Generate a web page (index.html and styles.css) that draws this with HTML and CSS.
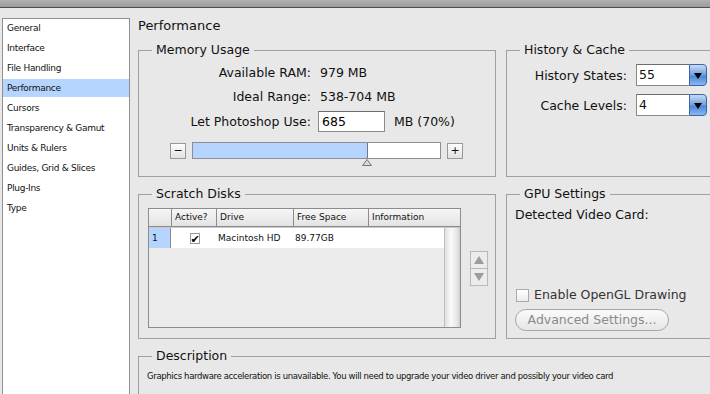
FILE: index.html
```html
<!DOCTYPE html>
<html lang="en">
<head>
    <meta charset="UTF-8">
    <title>Preferences</title>
    <link rel="stylesheet" href="styles.css">
</head>
<body>

<div class="titlebar"><span class="title">Preferences</span></div>

<div class="window">
    <ul class="nav">
        <li>General</li>
        <li>Interface</li>
        <li>File Handling</li>
        <li class="selected">Performance</li>
        <li>Cursors</li>
        <li>Transparency &amp; Gamut</li>
        <li>Units &amp; Rulers</li>
        <li>Guides, Grid &amp; Slices</li>
        <li>Plug-Ins</li>
        <li>Type</li>
    </ul>

    <div class="panel">
        <h1>Performance</h1>

        <div class="groups">
            <fieldset class="box memory">
                <legend>Memory Usage</legend>
                <div class="stats">
                    <span class="label">Available RAM:</span><span>979 MB</span>
                    <span class="label">Ideal Range:</span><span>538-704 MB</span>
                    <span class="label">Let Photoshop Use:</span>
                    <span class="use"><input class="field" type="text" value="685"><span>MB (70%)</span></span>
                </div>
                <div class="slider">
                    <span class="step">&minus;</span>
                    <div class="track">
                        <div class="fill" style="width: 174px"></div>
                        <svg class="thumb" width="10" height="7" viewBox="0 0 10 7"><path d="M5 0.5 L9.5 6.5 L0.5 6.5 Z" fill="#d8d8d8" stroke="#777"/></svg>
                    </div>
                    <span class="step">+</span>
                </div>
            </fieldset>

            <fieldset class="box history">
                <legend>History &amp; Cache</legend>
                <div class="selects">
                    <span class="label">History States:</span>
                    <span class="combo"><span class="value">55</span><span class="drop"></span></span>
                    <span class="label">Cache Levels:</span>
                    <span class="combo"><span class="value">4</span><span class="drop"></span></span>
                </div>
            </fieldset>

            <fieldset class="box scratch">
                <legend>Scratch Disks</legend>
                <div class="disks">
                    <div class="table">
                        <div class="thead">
                            <span class="c0"></span>
                            <span class="c1">Active?</span>
                            <span class="c2">Drive</span>
                            <span class="c3">Free Space</span>
                            <span class="c4">Information</span>
                        </div>
                        <div class="tbody">
                            <div class="rows">
                                <div class="row">
                                    <span class="c0 num">1</span>
                                    <span class="c1"><span class="check">&#10004;</span></span>
                                    <span class="c2">Macintosh HD</span>
                                    <span class="c3">89.77GB</span>
                                </div>
                            </div>
                            <div class="vscroll"></div>
                        </div>
                    </div>
                    <div class="order">
                        <span class="arrow up"></span>
                        <span class="arrow down"></span>
                    </div>
                </div>
            </fieldset>

            <fieldset class="box gpu">
                <legend>GPU Settings</legend>
                <div class="card">Detected Video Card:</div>
                <label class="opengl"><span class="tick"></span>Enable OpenGL Drawing</label>
                <span class="pill">Advanced Settings...</span>
            </fieldset>

            <fieldset class="box desc">
                <legend>Description</legend>
                <p>Graphics hardware acceleration is unavailable. You will need to upgrade your video driver and possibly your video card</p>
            </fieldset>
        </div>
    </div>
</div>

</body>
</html>
```

FILE: styles.css
```css
body {
    margin: 0;
    width: 710px;
    height: 394px;
    overflow: hidden;
    background: #e8e8e8;
    font-family: "DejaVu Sans", sans-serif;
    color: #111;
}
.titlebar {
    height: 7px;
    background: linear-gradient(#b0b0b0, #9c9c9c);
    border-bottom: 1px solid #4e4e4e;
    overflow: hidden;
    text-align: center;
}
.title {
    display: block;
    margin-top: -11px;
    padding-left: 136px;
    font-size: 13px;
    line-height: 14px;
    color: #222;
}
.window {
    display: flex;
    padding-top: 10px;
}
.nav {
    flex-shrink: 0;
    list-style: none;
    margin: 0 0 0 2px;
    padding: 0;
    width: 126px;
    height: 375px;
    background: #fff;
    border: 1px solid #8f8f8f;
    border-bottom: 0;
    font-size: 9px;
    letter-spacing: -0.3px;
}
.nav li {
    height: 20px;
    line-height: 18px;
    padding-left: 4px;
    white-space: nowrap;
}
.nav li.selected {
    background: linear-gradient(#b5d5ff 18px, #fff 18px);
}
.panel {
    margin-left: 8px;
    min-width: 0;
}
h1 {
    margin: 0;
    font-size: 13px;
    font-weight: normal;
    line-height: 16px;
}
.groups {
    display: grid;
    grid-template-columns: 358px 204px;
    grid-template-rows: 135px 153px 46px;
    column-gap: 10px;
    row-gap: 9px;
    margin-top: 8px;
}
.box {
    margin: 0;
    padding: 0;
    border: 1px solid #a0a0a0;
    min-width: 0;
    font-size: 12.5px;
}
.history, .gpu, .desc {
    border-right: 0;
}
.box legend {
    margin-left: 13px;
    padding: 0 4px;
    line-height: 16px;
}
.stats {
    display: grid;
    grid-template-columns: 172px auto;
    grid-template-rows: 24px 24px 26px;
    column-gap: 9px;
    align-items: center;
    margin-top: 2px;
}
.label {
    text-align: right;
}
.use {
    display: flex;
    align-items: center;
    gap: 9px;
}
.field {
    width: 67px;
    height: 21px;
    margin: 0 0 0 -2px;
    padding: 0 3px;
    box-sizing: border-box;
    border: 1px solid #8a8a8a;
    border-top-color: #6a6a6a;
    font: inherit;
    background: #fff;
}
.slider {
    display: flex;
    align-items: flex-start;
    gap: 6px;
    margin: 8px 0 0 31px;
}
.step {
    width: 14px;
    height: 14px;
    border: 1px solid #999;
    background: linear-gradient(#fdfdfd, #e2e2e2);
    font-size: 11px;
    line-height: 13px;
    text-align: center;
    margin-top: 1px;
}
.track {
    position: relative;
    width: 247px;
    height: 15px;
    border: 1px solid #8e8e8e;
    background: #fff;
}
.fill {
    height: 100%;
    background: #b5d5ff;
    border-right: 1px solid #777;
}
.thumb {
    position: absolute;
    left: 169px;
    top: 16px;
}
.selects {
    display: grid;
    grid-template-columns: 120px 71px;
    grid-template-rows: 22px 22px;
    column-gap: 9px;
    row-gap: 8px;
    align-items: center;
    margin-top: 6px;
}
.combo {
    display: flex;
    height: 22px;
}
.combo .value {
    flex: 1;
    background: #fff;
    border: 1px solid #8a8a8a;
    border-top-color: #6b6b6b;
    border-right: 0;
    padding-left: 2px;
    line-height: 20px;
}
.combo .drop {
    position: relative;
    width: 16px;
    border: 1px solid #3f63a8;
    border-radius: 0 4px 4px 0;
    background: linear-gradient(#c7dcf6, #6d9fe0 50%, #4a86d8 55%, #8ab8f0);
}
.combo .drop::after {
    content: "";
    position: absolute;
    left: 4px;
    top: 8px;
    border-left: 4px solid transparent;
    border-right: 4px solid transparent;
    border-top: 6px solid #000;
}
.disks {
    display: flex;
    align-items: flex-start;
    gap: 9px;
    margin: 6px 0 0 9px;
}
.table {
    width: 311px;
    height: 118px;
    border: 1px solid #8c8c8c;
    display: flex;
    flex-direction: column;
    font-size: 9px;
}
.thead {
    display: flex;
    height: 17px;
    line-height: 16px;
    border-bottom: 1px solid #8c8c8c;
    background: linear-gradient(#f6f6f6, #e3e3e3);
}
.thead span {
    border-right: 1px solid #8c8c8c;
    padding-left: 3px;
    box-sizing: border-box;
}
.thead span:last-child {
    border-right: 0;
}
.c0 { width: 23px; }
.c1 { width: 45px; }
.c2 { width: 77px; }
.c3 { width: 75px; }
.c4 { flex: 1; }
.tbody {
    flex: 1;
    display: flex;
    background: #ebebeb;
    border-top: 1px solid #c8c8c8;
}
.rows {
    flex: 1;
}
.row {
    display: flex;
    height: 20px;
    line-height: 20px;
    background: #fff;
}
.row span {
    box-sizing: border-box;
    padding-left: 2px;
}
.row .num {
    background: #b5d5ff;
    border-right: 1px solid #8c8c8c;
    padding-left: 3px;
    width: 22px;
}
.row .c1 {
    display: flex;
    justify-content: center;
    align-items: center;
}
.check {
    width: 10px;
    height: 11px;
    border: 1px solid #9a9a9a;
    background: #fff;
    font-size: 11px;
    line-height: 12px;
    text-align: center;
    color: #000;
    padding: 0 !important;
}
.vscroll {
    width: 15px;
    border-left: 1px solid #bdbdbd;
    background: linear-gradient(90deg, #e0e0e0, #fafafa 40%, #e6e6e6 80%, #cfcfcf);
}
.order {
    display: flex;
    flex-direction: column;
    margin-top: 43px;
    border: 1px solid #b8b8b8;
}
.arrow {
    position: relative;
    width: 16px;
    height: 16px;
    background: #ececec;
}
.arrow.up {
    border-bottom: 1px solid #b8b8b8;
}
.arrow::after {
    content: "";
    position: absolute;
    left: 3px;
    border-left: 5px solid transparent;
    border-right: 5px solid transparent;
}
.arrow.up::after {
    top: 4px;
    border-bottom: 8px solid #9c9c9c;
}
.arrow.down::after {
    top: 4px;
    border-top: 8px solid #9c9c9c;
}
.gpu {
    display: flex;
    flex-direction: column;
    align-items: flex-start;
}
.card {
    margin: 5px 0 0 8px;
    line-height: 16px;
    white-space: nowrap;
}
.opengl {
    display: flex;
    align-items: center;
    gap: 5px;
    margin: 64px 0 0 9px;
    line-height: 16px;
    color: #333;
    white-space: nowrap;
}
.tick {
    width: 11px;
    height: 11px;
    border: 1px solid #aaa;
    background: linear-gradient(#fff, #ececec);
}
.pill {
    margin: 6px 0 0 8px;
    width: 152px;
    height: 20px;
    line-height: 20px;
    border: 1px solid #a8a8a8;
    border-radius: 11px;
    background: linear-gradient(#fbfbfb, #e6e6e6);
    color: #8a8a8a;
    text-align: center;
}
.desc {
    grid-column: 1 / span 2;
    border-bottom: 0;
}
.desc p {
    margin: 6px 0 0 8px;
    font-size: 8.5px;
    letter-spacing: -0.35px;
    line-height: 12px;
    white-space: nowrap;
}
```
